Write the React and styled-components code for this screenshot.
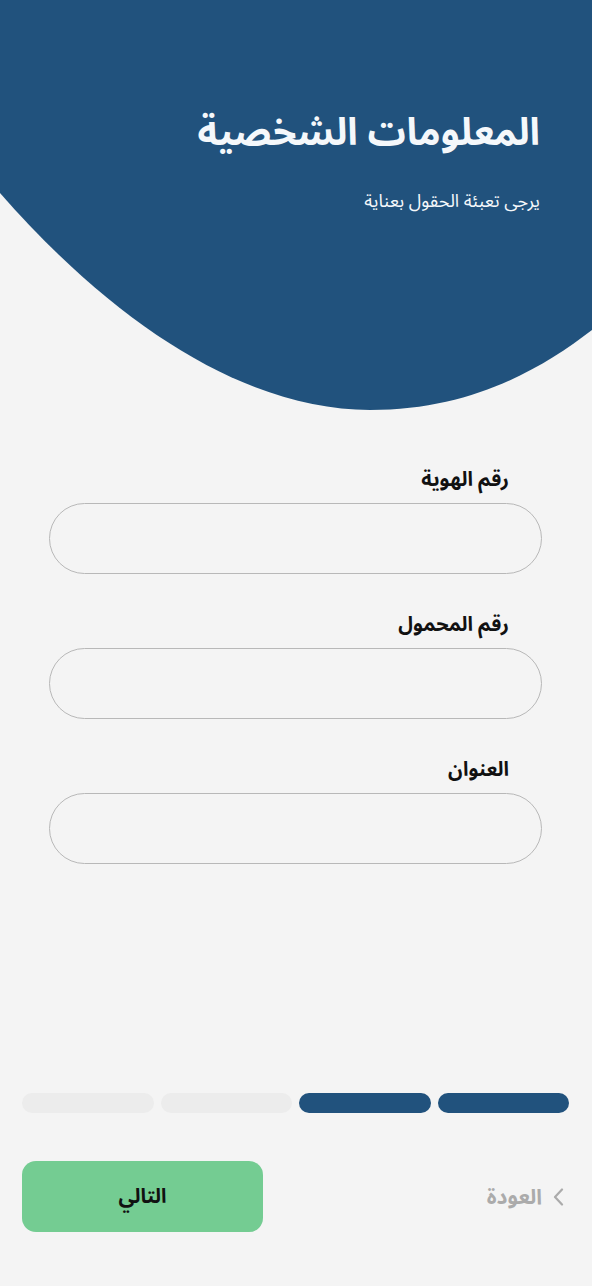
import React from 'react'
import styled, { createGlobalStyle } from 'styled-components'

const GlobalStyle = createGlobalStyle`
  html, body {
    margin: 0;
    padding: 0;
    background: #f4f4f4;
  }
  body {
    font-family: "Noto Sans Arabic", "DejaVu Sans", "Noto Sans", sans-serif;
  }
`

const Page = styled.div`
  direction: rtl;
  width: 592px;
  min-height: 1286px;
  background: #f4f4f4;
  display: flex;
  flex-direction: column;
  overflow: hidden;
`

const Header = styled.header`
  position: relative;
  height: 410px;
  padding: 108px 52px 0 0;
  box-sizing: border-box;
`

const Wave = styled.svg`
  position: absolute;
  inset: 0;
  width: 592px;
  height: 410px;
  z-index: 0;
`

const Title = styled.h1`
  position: relative;
  z-index: 1;
  margin: 0;
  color: #f5f8fb;
  font-size: 38px;
  font-weight: bold;
  line-height: 50px;
`

const Subtitle = styled.p`
  position: relative;
  z-index: 1;
  margin: 31px 0 0;
  color: #f5f8fb;
  font-size: 18px;
  line-height: 24px;
`

const Form = styled.form`
  display: flex;
  flex-direction: column;
  gap: 38px;
  padding: 57px 50px 0 49px;
`

const Field = styled.div`
  display: flex;
  flex-direction: column;
  gap: 10px;
`

const Label = styled.label`
  padding-right: 33px;
  font-size: 20px;
  font-weight: bold;
  color: #111;
  line-height: 26px;
`

const Input = styled.input`
  height: 71px;
  box-sizing: border-box;
  border: 1px solid #b8b8b8;
  border-radius: 36px;
  background: transparent;
  outline: none;
  padding: 0 24px;
  font: inherit;
`

const Progress = styled.div`
  margin-top: auto;
  display: flex;
  gap: 7px;
  padding: 0 23px 0 22px;
`

const Step = styled.div`
  flex: 1;
  height: 20px;
  border-radius: 10px;
  background: ${(p) => (p.$done ? '#21527d' : '#ececec')};
`

const Footer = styled.div`
  display: flex;
  align-items: center;
  justify-content: space-between;
  padding: 48px 28px 54px 22px;
`

const Back = styled.button`
  display: flex;
  align-items: center;
  gap: 10px;
  border: none;
  background: none;
  color: #ababab;
  font: inherit;
  font-size: 21px;
  font-weight: bold;
  padding: 0;
  cursor: pointer;
`

const Next = styled.button`
  width: 241px;
  height: 71px;
  border: none;
  border-radius: 14px;
  background: #74cc92;
  color: #111;
  font: inherit;
  font-size: 20px;
  font-weight: bold;
  cursor: pointer;
`

const fields = ['رقم الهوية', 'رقم المحمول', 'العنوان']
const steps = [true, true, false, false]

export default function App() {
  return (
    <Page>
      <GlobalStyle />
      <Header>
        <Wave viewBox="0 0 592 410" preserveAspectRatio="none">
          <path
            d="M0,0 H592 V330 C540,370 470,410 370,410 C250,410 120,330 0,193 Z"
            fill="#21527d"
          />
        </Wave>
        <Title>المعلومات الشخصية</Title>
        <Subtitle>يرجى تعبئة الحقول بعناية</Subtitle>
      </Header>
      <Form>
        {fields.map((f) => (
          <Field key={f}>
            <Label>{f}</Label>
            <Input type="text" />
          </Field>
        ))}
      </Form>
      <Progress>
        {steps.map((d, i) => (
          <Step key={i} $done={d} />
        ))}
      </Progress>
      <Footer>
        <Back>
          <svg width="12" height="18" viewBox="0 0 12 18" fill="none">
            <path d="M10 1.5 L3 9 L10 16.5" stroke="#ababab" strokeWidth="2.2" strokeLinecap="round" strokeLinejoin="round" />
          </svg>
          العودة
        </Back>
        <Next>التالي</Next>
      </Footer>
    </Page>
  )
}
